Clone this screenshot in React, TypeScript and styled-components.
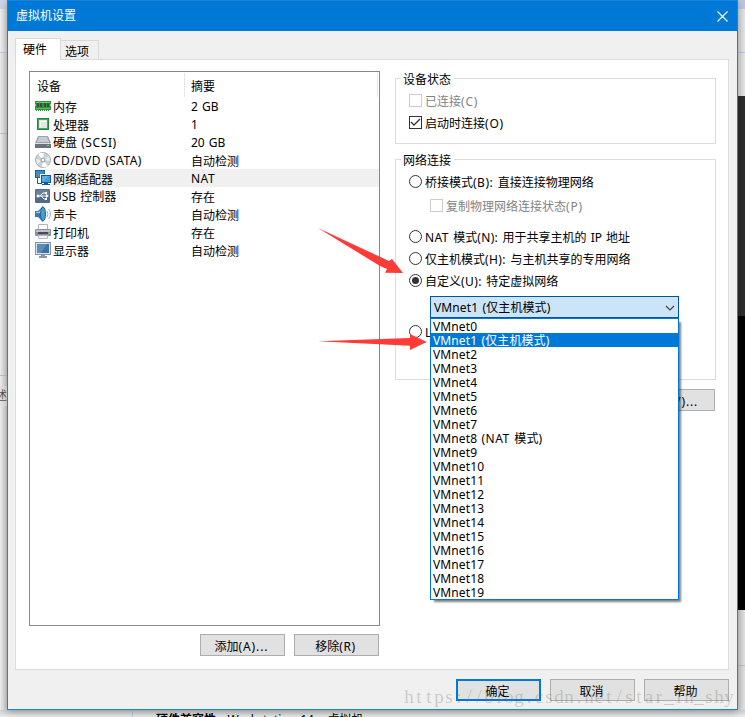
import React from "react";
import styled, { createGlobalStyle, css } from "styled-components";

const Global = createGlobalStyle`
  * { box-sizing: border-box; }
  body {
    margin: 0;
    overflow: hidden;
    font: 12px/18px "Noto Sans", "Noto Sans CJK SC", sans-serif;
    word-spacing: 1px;
    color: #000;
  }
`;

const Desktop = styled.div`
  position: relative;
  display: grid;
  grid-template: 710px 7px / 7px 731px 7px;
  width: 745px;
  height: 717px;
  overflow: hidden;
  background: #e6e6e6;
`;

const Strip = styled.div`
  display: flex;
  flex-direction: column;
  overflow: hidden;
`;

const Block = styled.div<{ $h: number; $bg: string }>`
  flex: none;
  height: ${(p) => p.$h}px;
  background: ${(p) => p.$bg};
`;

const ClippedWord = styled.div`
  flex: none;
  height: 20px;
  margin-left: -5px;
  width: 12px;
  color: #555;
  line-height: 20px;
`;

const Footer = styled.div`
  grid-column: 1 / 4;
  display: flex;
  background: linear-gradient(#cfcfcf, #ededed);
  overflow: hidden;
  white-space: pre;
`;

const FooterText = styled.div`
  flex: 1;
  margin-left: 132px;
  padding-left: 23px;
  border-left: 1px solid #b9cce4;
  line-height: 20px;
`;

const Dialog = styled.div`
  display: flex;
  flex-direction: column;
  border: 1px solid #1883d7;
  background: #f0f0f0;
  box-shadow: 0 2px 8px rgba(0, 0, 0, 0.3);
  z-index: 1;
`;

const TitleBar = styled.div`
  flex: none;
  display: flex;
  justify-content: space-between;
  align-items: center;
  height: 30px;
  padding: 0 9px 0 8px;
  background: #0078d7;
  color: #fff;
  line-height: 20px;
`;

const Tabs = styled.div`
  flex: none;
  display: flex;
  align-items: flex-end;
  height: 28px;
  padding-left: 7px;
`;

const Tab = styled.div<{ $active?: boolean }>`
  height: 19px;
  width: 38px;
  border: 1px solid #d9d9d9;
  border-left: 0;
  border-bottom: 0;
  padding-left: 4px;
  line-height: 21px;
  ${(p) =>
    p.$active &&
    css`
      z-index: 1;
      width: 46px;
      height: 22px;
      margin-bottom: -1px;
      border-left: 1px solid #d9d9d9;
      padding-left: 7px;
      background: #fff;
    `}
`;

const Panel = styled.div`
  flex: none;
  display: flex;
  gap: 15px;
  width: 714px;
  height: 611px;
  margin-left: 7px;
  padding: 11px 12px 0 13px;
  border: 1px solid #dcdcdc;
  background: #fff;
`;

const LeftColumn = styled.div`
  width: 351px;
`;

const DeviceList = styled.div`
  height: 555px;
  border: 1px solid #828790;
`;

const ListHeader = styled.div`
  display: flex;
  height: 25px;
  padding: 1px 1px 0 6px;
  line-height: 27px;
`;

const HeaderCell = styled.div<{ $w: number; $pad: number }>`
  width: ${(p) => p.$w}px;
  height: 24px;
  padding-left: ${(p) => p.$pad}px;
  border-right: 1px solid #e5e5e5;
`;

const DeviceRow = styled.div<{ $selected?: boolean }>`
  display: grid;
  grid-template-columns: 18px 138px 1fr;
  align-items: center;
  height: 18px;
  padding-left: 5px;
  white-space: nowrap;
  background: ${(p) => (p.$selected ? "linear-gradient(90deg, #fff 21px, #f0f0f0 21px)" : "none")};
`;

const Cell = styled.div<{ $low: boolean }>`
  height: 18px;
  line-height: ${(p) => (p.$low ? 22 : 20)}px;
`;

const Latin = styled.span<{ $ls: number }>`
  letter-spacing: ${(p) => p.$ls}px;
`;

const ButtonRow = styled.div<{ $top: number }>`
  display: flex;
  justify-content: flex-end;
  gap: 9px;
  padding: ${(p) => p.$top}px 1px 0 0;
`;

const Button = styled.button<{ $primary?: boolean }>`
  width: 85px;
  height: 22px;
  padding: ${(p) => (p.$primary ? 1 : 2)}px 2px 0 0;
  border: ${(p) => (p.$primary ? "2px solid #0078d7" : "1px solid #adadad")};
  background: #e1e1e1;
  color: #000;
  font: inherit;
  line-height: 20px;
  white-space: nowrap;
`;

const RightColumn = styled.div`
  width: 321px;
  padding-top: 7px;
`;

const Group = styled.div<{ $h: number; $mb: number }>`
  height: ${(p) => p.$h}px;
  margin-bottom: ${(p) => p.$mb}px;
  border: 1px solid #dcdcdc;
  padding-left: 5px;
`;

const Legend = styled.div`
  width: 53px;
  height: 18px;
  margin-top: -9px;
  padding-left: 2px;
  background: #fff;
  line-height: 20px;
`;

const Option = styled.div<{ $mt?: number; $indent?: number; $disabled?: boolean }>`
  display: flex;
  align-items: center;
  gap: 3px;
  height: 22px;
  margin-top: ${(p) => p.$mt ?? 0}px;
  margin-left: ${(p) => 8 + (p.$indent ?? 0)}px;
  padding-bottom: 1px;
  color: ${(p) => (p.$disabled ? "#838383" : "#000")};
  white-space: pre;
  > span {
    padding-top: 2px;
  }
`;

const Box = styled.div<{ $disabled?: boolean }>`
  display: flex;
  width: 13px;
  height: 13px;
  border: 1px solid ${(p) => (p.$disabled ? "#ccc" : "#333")};
`;

const Radio = styled.div`
  display: grid;
  place-items: center;
  width: 13px;
  height: 13px;
  border: 1px solid #333;
  border-radius: 50%;
`;

const Dot = styled.div`
  width: 7px;
  height: 7px;
  border-radius: 50%;
  background: #333;
`;

const Combo = styled.div`
  position: relative;
  display: flex;
  justify-content: space-between;
  align-items: center;
  width: 249px;
  height: 22px;
  margin: 4px 0 0 29px;
  padding: 2px 3px 0;
  border: 1px solid #00559b;
  background: #cce4f7;
  letter-spacing: 0.12px;
  white-space: nowrap;
`;

const Dropdown = styled.div`
  position: absolute;
  z-index: 2;
  top: 21px;
  left: -1px;
  width: 249px;
  height: 282px;
  border: 1px solid #0078d7;
  background: #fff;
  box-shadow: 3px 3px 2px -1px rgba(0, 0, 0, 0.5);
`;

const Item = styled.div<{ $selected?: boolean }>`
  height: 14px;
  padding-left: 2px;
  line-height: 16px;
  overflow: hidden;
  background: ${(p) => (p.$selected ? "#0078d7" : "#fff")};
  color: ${(p) => (p.$selected ? "#fff" : "#000")};
`;

const DialogButtons = styled(ButtonRow)`
  padding-right: 8px;
`;

const Annotations = styled.svg`
  position: absolute;
  z-index: 4;
  left: 310px;
  top: 220px;
`;

const Watermark = styled.div`
  position: absolute;
  z-index: 4;
  left: 404px;
  top: 685px;
  display: grid;
  grid-template-columns: repeat(33, 10px);
  justify-items: center;
  font: 19px/24px "Liberation Serif", serif;
  color: rgba(120, 120, 110, 0.32);
`;

const icons: Record<string, React.ReactNode> = {
  memory: (
    <>
      <path d="M0 3h16v3l-1 1 1 1v4H0V8l1-1-1-1z" fill="#2d963b" />
      <path d="M1 4h14v1H1z" fill="#78cc6d" />
      <path d="M2 5h2v4H2zm3 0h2v4H5zm4 0h2v4H9zm3 0h2v4h-2z" fill="#3b4a3f" />
      <path d="M1 10h14v1H1z" fill="#5fbb5c" />
      <path d="M1 12h1v1H1zm2 0h1v1H3zm2 0h1v1H5zm2 0h1v1H7zm2 0h1v1H9zm2 0h1v1h-1zm2 0h1v1h-1z" fill="#548354" />
    </>
  ),
  cpu: (
    <>
      <path d="M2 2h12v12H2z" fill="#20883b" />
      <path d="M3 3h10v10H3z" fill="#47a957" />
      <path d="M4 4h8v8H4z" fill="#e4e7e4" />
      <path d="M5 5h6v1H5zm0 1h1v5H5z" fill="#fff" />
    </>
  ),
  disk: (
    <>
      <path d="M3 2h10l3 7H0z" fill="#9aa3ad" />
      <path d="M4 3h8l2 5H2z" fill="#c6ccd2" />
      <path d="M0 9h16v5H0z" fill="#69717c" />
      <path d="M0 9h16v1H0z" fill="#dbe0e4" />
      <path d="M12 11h2v1h-2z" fill="#68ed59" />
    </>
  ),
  disc: (
    <>
      <circle cx="8" cy="8" r="7.5" fill="#cbd1d5" stroke="#a3abb1" />
      <path d="M8 8 3 2Q6 0 9 1zM8 8l5 6q-3 2-6 1z" fill="#fff" />
      <path d="m8 8 6-4 1 5zM8 8l-6 4-1-5z" fill="#e6edef" />
      <circle cx="8" cy="8" r="2.6" fill="#a5b0b7" />
      <circle cx="8" cy="8" r="1.2" fill="#fff" />
    </>
  ),
  network: (
    <>
      <path d="M0 0h10v8H0z" fill="#205e96" />
      <path d="M1 1h8v6H1z" fill="#3a8cca" />
      <path d="M2.5 8v5.5H7" fill="none" stroke="#205e96" />
      <path d="M5 4h11v9H5z" fill="#fff" />
      <path d="M6 5h10v8H6zm3 8h4v1h2v1H7v-1h2z" fill="#17588f" />
      <path d="M7 6h8v6H7z" fill="#3f9fe0" />
      <path d="M7 6h7l-5 5H7z" fill="#5cb0ea" />
    </>
  ),
  usb: (
    <>
      <rect y="1" width="15" height="14" rx="1" fill="#4f6d8b" />
      <path d="M1 2h13v5H1z" fill="#68829c" />
      <path d="M3 8h9M5 8l3-3h3M6 8l3 3h2" fill="none" stroke="#fff" />
      <circle cx="3" cy="8" r="1.5" fill="#fff" />
      <path d="m11 6 3 2-3 2zM10 4h2v2h-2zm0 6h2v2h-2z" fill="#fff" />
    </>
  ),
  sound: (
    <>
      <path d="M0 5h3l5-5v16l-5-5H0z" fill="#327aaf" />
      <path d="M1 6h3l3-4v5H1z" fill="#a6d5ef" />
      <ellipse cx="8" cy="8" rx="2.5" ry="7" fill="#4c9bce" stroke="#28618d" />
      <path d="M12 5q2 3 0 6M13.5 3q4 5 0 10" fill="none" stroke="#8db8d7" />
    </>
  ),
  printer: (
    <>
      <path d="M3.5.5h9V7h-9z" fill="#fff" stroke="#b5b5c2" />
      <rect y="5" width="16" height="7" rx="1" fill="#8c8d9d" />
      <path d="M1 6h14v2H1z" fill="#c0c0ce" />
      <path d="M3 8h10v2H3z" fill="#484a5a" />
      <path d="M3.5 11.5h9v3h-9z" fill="#f4f4f8" stroke="#b5b5c4" />
      <path d="M13 9h2v1h-2z" fill="#7ed66b" />
    </>
  ),
  display: (
    <>
      <path d="M0 0h16v13H0z" fill="#8294a5" />
      <path d="M1 1h14v11H1z" fill="#dbe3e9" />
      <path d="M2 2h12v9H2z" fill="#3e72a2" />
      <path d="M2 2h10l-6 9H2z" fill="#5c8db6" />
      <path d="M6 13h4v1h2v2H4v-2h2z" fill="#8997a5" />
    </>
  ),
};

type Device = { icon: string; name: React.ReactNode; summary: string; lowName?: boolean };

const devices: Device[] = [
  { icon: "memory", name: "内存", summary: "2 GB" },
  { icon: "cpu", name: "处理器", summary: "1" },
  { icon: "disk", name: <>硬盘 <Latin $ls={0.6}>(SCSI)</Latin></>, summary: "20 GB", lowName: false },
  { icon: "disc", name: <Latin $ls={0.4}>CD/DVD (SATA)</Latin>, summary: "自动检测", lowName: false },
  { icon: "network", name: "网络适配器", summary: "NAT" },
  { icon: "usb", name: "USB 控制器", summary: "存在", lowName: false },
  { icon: "sound", name: "声卡", summary: "自动检测" },
  { icon: "printer", name: "打印机", summary: "存在" },
  { icon: "display", name: "显示器", summary: "自动检测" },
];

const networks: React.ReactNode[] = Array.from({ length: 20 }, (_, i) => `VMnet${i}`);
networks[1] = "VMnet1 (仅主机模式)";
networks[8] = <>VMnet8 <Latin $ls={0.5}>(NAT </Latin>模式)</>;

export default function App() {
  return (
    <>
      <Global />
      <Desktop>
        <Strip>
          <Block $h={9} $bg="#cbd7e6" />
          <Block $h={43} $bg="linear-gradient(90deg,#f0f0f0,#d8d8d8)" />
          <Block $h={1} $bg="#b7cbe5" />
          <Block $h={80} $bg="linear-gradient(90deg,#ececec,#d4d4d4)" />
          <Block $h={1} $bg="#c4c4c4" />
          <Block $h={241} $bg="linear-gradient(90deg,#eee,#d0d0d0)" />
          <Block $h={1} $bg="#c4c4c4" />
          <Block $h={10} $bg="linear-gradient(90deg,#eee,#d0d0d0)" />
          <ClippedWord>述</ClippedWord>
          <Block $h={304} $bg="linear-gradient(90deg,#eee,#d0d0d0)" />
        </Strip>
        <Dialog>
          <TitleBar>
            虚拟机设置
            <svg width="11" height="11" viewBox="0 0 11 11" fill="none" stroke="#fff" strokeWidth="1.1">
              <path d="m.5.5 10 10m0-10-10 10" />
            </svg>
          </TitleBar>
          <Tabs>
            <Tab $active>硬件</Tab>
            <Tab>选项</Tab>
          </Tabs>
          <Panel>
            <LeftColumn>
              <DeviceList>
                <ListHeader>
                  <HeaderCell $w={149} $pad={1}>设备</HeaderCell>
                  <HeaderCell $w={193} $pad={6}>摘要</HeaderCell>
                </ListHeader>
                {devices.map(({ icon, name, summary, lowName = true }) => (
                  <DeviceRow key={icon} $selected={icon === "network"}>
                    <svg width="16" height="16" viewBox="0 0 16 16">{icons[icon]}</svg>
                    <Cell $low={lowName}>{name}</Cell>
                    <Cell $low={!/[A-Z0-9]/.test(summary)}>
                      <Latin $ls={summary === "NAT" ? 0.5 : 0}>{summary}</Latin>
                    </Cell>
                  </DeviceRow>
                ))}
              </DeviceList>
              <ButtonRow $top={8}>
                <Button>添加<Latin $ls={0.9}>(A)...</Latin></Button>
                <Button>移除<Latin $ls={0.6}>(R)</Latin></Button>
              </ButtonRow>
            </LeftColumn>
            <RightColumn>
              <Group $h={66} $mb={15}>
                <Legend>设备状态</Legend>
                <Option $mt={2} $disabled>
                  <Box $disabled />
                  <span>已连接<Latin $ls={0.8}>(C)</Latin></span>
                </Option>
                <Option>
                  <Box>
                    <svg width="11" height="11" viewBox="0 0 11 11" fill="none" stroke="#333" strokeWidth="1.3">
                      <path d="m1 5 3 3 6-6" />
                    </svg>
                  </Box>
                  <span>启动时连接<Latin $ls={0.8}>(O)</Latin></span>
                </Option>
              </Group>
              <Group $h={221} $mb={9}>
                <Legend>网络连接</Legend>
                <Option $mt={2}>
                  <Radio />
                  <span>桥接模式<Latin $ls={0.5}>(B): </Latin>直接连接物理网络</span>
                </Option>
                <Option $mt={2} $indent={21} $disabled>
                  <Box $disabled />
                  <span>复制物理网络连接状态<Latin $ls={0.8}>(P)</Latin></span>
                </Option>
                <Option $mt={9}>
                  <Radio />
                  <span><Latin $ls={0.4}>NAT </Latin>模式<Latin $ls={0.3}>(N): </Latin>用于共享主机的 IP 地址</span>
                </Option>
                <Option>
                  <Radio />
                  <span>仅主机模式<Latin $ls={0.4}>(H): </Latin>与主机共享的专用网络</span>
                </Option>
                <Option>
                  <Radio><Dot /></Radio>
                  <span>自定义<Latin $ls={0.4}>(U): </Latin>特定虚拟网络</span>
                </Option>
                <Combo>
                  VMnet1 (仅主机模式)
                  <svg width="10" height="7" viewBox="0 0 10 7" fill="none" stroke="#444" strokeWidth="1.2">
                    <path d="m1 1 4 4 4-4" />
                  </svg>
                  <Dropdown>
                    {networks.map((n, i) => (
                      <Item key={i} $selected={i === 1}>{n}</Item>
                    ))}
                  </Dropdown>
                </Combo>
                <Option $mt={3}>
                  <Radio />
                  <span>LAN 区段(L):</span>
                </Option>
              </Group>
              <ButtonRow $top={0}>
                <Button>高级<Latin $ls={0.9}>(V)...</Latin></Button>
              </ButtonRow>
            </RightColumn>
          </Panel>
          <DialogButtons $top={9}>
            <Button $primary>确定</Button>
            <Button>取消</Button>
            <Button>帮助</Button>
          </DialogButtons>
        </Dialog>
        <Strip>
          <Block $h={9} $bg="#bfc8e0" />
          <Block $h={43} $bg="linear-gradient(90deg,#d8d8d8,#e6e6e6)" />
          <Block $h={1} $bg="#b3c6e2" />
          <Block $h={43} $bg="linear-gradient(90deg,#d8d8d8,#e6e6e6)" />
          <Block $h={220} $bg="#2c2c2c" />
          <Block $h={294} $bg="#000" />
          <Block $h={55} $bg="linear-gradient(90deg,#d0d0d0,#e2e2e2)" />
          <Block $h={1} $bg="#bfbfbf" />
          <Block $h={44} $bg="linear-gradient(90deg,#d0d0d0,#e2e2e2)" />
        </Strip>
        <Footer>
          <FooterText><b>硬件兼容性:</b>  Workstation 14.x 虚拟机</FooterText>
        </Footer>
        <Annotations width="120" height="140" viewBox="0 0 120 140" fill="#ff3b37">
          <path d="m8 8 71 33 3-2 11 14-18-.2 2-3.8-7-3z" />
          <path d="m8 121.3 92-3.3v-4l16.7 8-16.7 8v-4.3z" />
        </Annotations>
        <Watermark>
          {[..."https://blog.csdn.net/star_in_shy"].map((c, i) => (
            <span key={i}>{c}</span>
          ))}
        </Watermark>
      </Desktop>
    </>
  );
}
